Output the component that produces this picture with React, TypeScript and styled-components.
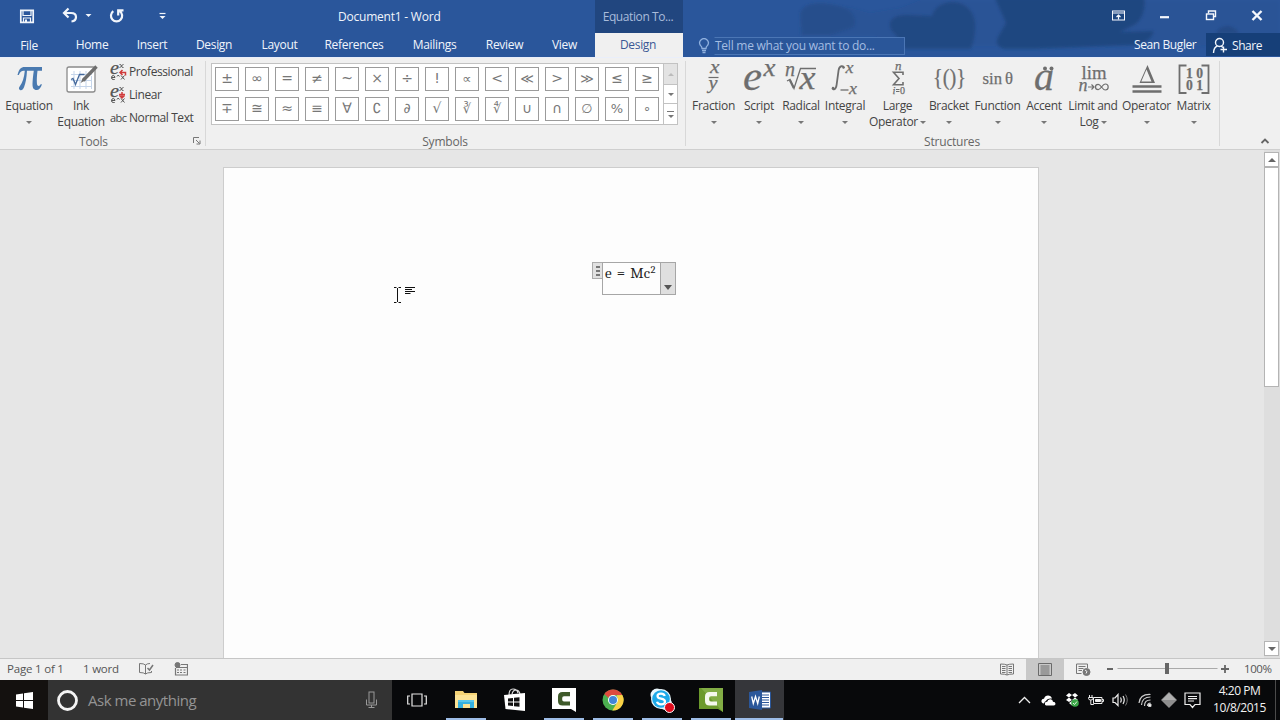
import React from "react";
import styled, { createGlobalStyle, css } from "styled-components";

const ui = `"Open Sans", "Noto Sans", sans-serif`;
const serif = `"Liberation Serif", "DejaVu Serif", serif`;

const GlobalStyle = createGlobalStyle`
  * { box-sizing: border-box; }
  body { margin: 0; overflow: hidden; }
`;

const Window = styled.div`
  width: 1280px;
  height: 720px;
  display: flex;
  flex-direction: column;
  font-family: ${ui};
  font-size: 12px;
  letter-spacing: -0.32px;
  color: #444;
  background: #e6e6e6;
  overflow: hidden;
  white-space: nowrap;
`;

/* ---------- title bar and tabs ---------- */

const Header = styled.header`
  position: relative;
  height: 57px;
  flex: none;
  display: flex;
  background: #2a569b;
  color: #f1f5fb;
`;

const Backdrop = styled.svg`
  position: absolute;
  left: 780px;
  top: 0;
`;

const HeaderLeft = styled.div`
  width: 595px;
  display: flex;
  flex-direction: column;
`;

const TitleRow = styled.div`
  height: 33px;
  display: flex;
  align-items: center;
  padding-left: 19px;
`;

const QuickAccess = styled.div`
  width: 319px;
  display: flex;
  height: 30px;
`;

const Title = styled.div`
  letter-spacing: -0.22px;
`;

const TabRow = styled.nav`
  height: 24px;
  display: flex;
`;

const Tab = styled.div<{ $w: number }>`
  width: ${(p) => p.$w}px;
  height: 24px;
  line-height: 24px;
  text-align: center;
  &:first-child { line-height: 26px; }
`;

const Contextual = styled.div`
  width: 88px;
  display: flex;
  flex-direction: column;
  text-align: center;
`;

const ContextTitle = styled.div`
  height: 33px;
  line-height: 34px;
  padding-right: 2px;
  background: #21467f;
  color: #a9bcdb;
  letter-spacing: -0.4px;
`;

const ActiveTab = styled.div`
  height: 24px;
  line-height: 24px;
  padding-right: 2px;
  background: #f0f0f0;
  color: #3a5795;
`;

const HeaderRight = styled.div`
  position: relative;
  flex: 1;
  display: flex;
  flex-direction: column;
`;

const Controls = styled.div`
  height: 33px;
  display: flex;
  justify-content: flex-end;
  align-items: center;
`;

const ActionRow = styled.div`
  height: 24px;
  display: flex;
  padding-left: 14px;
`;

const TellMe = styled.div`
  width: 208px;
  height: 18px;
  margin-top: 4px;
  display: flex;
  align-items: center;
  color: #a4bde2;
  letter-spacing: -0.25px;
`;

const TellField = styled.div`
  width: 191px;
  height: 18px;
  margin-left: 3px;
  line-height: 15px;
  border: 1px solid #4b76b5;
  border-left-color: transparent;
  background: #2a5699;
`;

const Account = styled.div`
  margin-left: auto;
  width: 72px;
  line-height: 24px;
  letter-spacing: -0.4px;
`;

const Share = styled.div`
  width: 74px;
  height: 23px;
  display: flex;
  align-items: center;
  gap: 4px;
  padding: 1px 0 0 6px;
  background: #163f78;
  letter-spacing: -0.45px;
`;

/* ---------- ribbon ---------- */

const Ribbon = styled.section`
  height: 93px;
  flex: none;
  display: flex;
  background: #f0f0f0;
  border-top: 1px solid #e9eefa;
  border-bottom: 1px solid #cfcfcf;
`;

const Group = styled.div<{ $w: number }>`
  width: ${(p) => p.$w}px;
  display: flex;
  flex-direction: column;
  padding-top: 2px;
`;

const Divider = styled.div`
  width: 1px;
  height: 85px;
  margin-top: 3px;
  background: #d8d8d8;
`;

const GroupBody = styled.div`
  height: 73px;
  display: flex;
`;

const GroupName = styled.div`
  position: relative;
  height: 16px;
  line-height: 17px;
  padding-right: 18px;
  text-align: center;
  color: #666;
  letter-spacing: -0.2px;
`;

const CenteredName = styled(GroupName)`
  padding-right: 1px;
`;

const Launcher = styled.svg`
  position: absolute;
  right: 4px;
  top: 4px;
`;

const BigButton = styled.div<{ $w: number }>`
  width: ${(p) => p.$w}px;
  display: flex;
  flex-direction: column;
  align-items: center;
  line-height: 16px;
`;

const IconBox = styled.svg`
  display: block;
  width: 48px;
  height: 36px;
  margin-bottom: 2px;
  overflow: visible;
  flex: none;
`;

const Line = styled.div`
  height: 16px;
  display: flex;
  align-items: center;
  justify-content: center;
  gap: 2px;
`;

const Caret = styled.i<{ $c?: string }>`
  border: 3px solid transparent;
  border-top-color: ${(p) => p.$c || "#777"};
  border-bottom: 0;
`;

const SmallButtons = styled.div`
  display: flex;
  flex-direction: column;
  padding: 0 0 0 6px;
  letter-spacing: -0.42px;
`;

const SmallButton = styled.div`
  height: 23px;
  display: flex;
  align-items: center;
  gap: 3px;
`;

const Abc = styled.span`
  width: 16px;
  font-size: 11px;
  letter-spacing: -0.5px;
`;

const Gallery = styled.div`
  width: 467px;
  height: 62px;
  margin: 3px 0 8px 5px;
  display: flex;
  border: 1px solid #c2c2c2;
  background: #fff;
`;

const Cells = styled.div`
  display: grid;
  grid-template-columns: repeat(15, 24px);
  grid-auto-rows: 24px;
  gap: 6px;
  padding: 3px;
  width: 451px;
`;

const Cell = styled.div<{ $small?: boolean }>`
  border: 1px solid #9b9b9b;
  text-align: center;
  line-height: 21px;
  font-family: "DejaVu Sans", sans-serif;
  font-size: ${(p) => (p.$small ? 13 : 14)}px;
  letter-spacing: 0;
  color: #777;
`;

const Scroller = styled.div`
  width: 14px;
  display: grid;
  grid-template-rows: 20px 19px 21px;
  border-left: 1px solid #c2c2c2;
`;

const ScrollCell = styled.div<{ $off?: boolean }>`
  display: flex;
  flex-direction: column;
  align-items: center;
  justify-content: center;
  gap: 3px;
  background: ${(p) => (p.$off ? "#e3e3e3" : "#fff")};
  & + & { border-top: 1px solid #c2c2c2; }
`;

const UpCaret = styled.i<{ $c: string }>`
  border: 3px solid transparent;
  border-bottom-color: ${(p) => p.$c};
  border-top: 0;
`;

const Bar = styled.i`
  width: 7px;
  height: 1px;
  background: #777;
`;

const Collapse = styled.svg`
  margin: 79px 0 0 40px;
`;

const StructureBody = styled(GroupBody)`
  padding-left: 4px;
`;

/* ---------- document ---------- */

const Workspace = styled.main`
  height: 508px;
  flex: none;
  display: flex;
`;

const Canvas = styled.div`
  position: relative;
  width: 1264px;
  padding: 17px 0 0 223px;
`;

const Sheet = styled.div`
  width: 816px;
  height: 491px;
  padding: 94px 0 0 368px;
  background: #fdfdfd;
  border: 1px solid #cdcdcd;
  border-bottom: 0;
`;

const EquationBox = styled.div`
  display: flex;
  align-items: flex-start;
`;

const Grip = styled.div`
  width: 10px;
  height: 17px;
  display: flex;
  flex-direction: column;
  align-items: center;
  justify-content: center;
  gap: 2px;
  padding-left: 1px;
  border: 1px solid #ababab;
  border-right: 0;
  background: #e1e1e1;
`;

const GripDot = styled.i`
  width: 4px;
  height: 2px;
  background: #777;
`;

const Formula = styled.div`
  width: 58px;
  height: 33px;
  padding-left: 2px;
  border: 1px solid #a6a6a6;
  border-right: 0;
  font-family: Cambria, Caladea, "Noto Serif", "DejaVu Serif", serif;
  font-size: 15px;
  line-height: 21px;
  letter-spacing: 0.2px;
  word-spacing: 1.5px;
  color: #222;
  & sup { font-size: 10.5px; line-height: 0; vertical-align: 5px; }
`;

const FormulaMenu = styled.div`
  width: 16px;
  height: 33px;
  display: flex;
  align-items: flex-end;
  justify-content: center;
  padding-bottom: 4px;
  border: 1px solid #a6a6a6;
  background: #dfdfdf;
`;

const MenuCaret = styled.i`
  border: 4px solid transparent;
  border-top: 5px solid #555;
  border-bottom: 0;
`;

const Pointer = styled.svg`
  position: absolute;
  left: 393px;
  top: 136px;
`;

const ScrollBar = styled.div`
  width: 16px;
  padding: 2px 1px 2px 0;
  display: flex;
  flex-direction: column;
  background: #dedede;
`;

const ScrollButton = styled.div`
  height: 15px;
  display: flex;
  align-items: center;
  justify-content: center;
  border: 1px solid #b4b4b4;
  background: #fff;
  & > i { border-width: 4px; }
`;

const ScrollUp = styled(UpCaret)`
  && { border-top: 0; }
`;

const ScrollDown = styled(Caret)`
  && { border-bottom: 0; }
`;

const ScrollThumb = styled.div`
  height: 220px;
  margin-bottom: auto;
  border: 1px solid #b4b4b4;
  background: #fff;
`;

/* ---------- status bar ---------- */

const StatusBar = styled.footer`
  height: 22px;
  flex: none;
  display: flex;
  align-items: center;
  padding-left: 7px;
  background: #f0f0f0;
  border-top: 1px solid #c6c6c6;
  font-size: 11.5px;
  letter-spacing: -0.2px;
  color: #555;
`;

const StatusText = styled.span<{ $w: number }>`
  width: ${(p) => p.$w}px;
  padding-bottom: 2px;
`;

const StatusIcon = styled.div<{ $w: number; $on?: boolean }>`
  width: ${(p) => p.$w}px;
  height: 21px;
  display: flex;
  align-items: center;
  justify-content: center;
  padding-bottom: 1px;
  ${(p) => p.$on && css`background: #c8c8c8;`}
`;

const ViewTools = styled.div`
  margin-left: auto;
  display: flex;
  align-items: center;
`;

const ZoomValue = styled.span`
  width: 50px;
  padding: 0 0 2px 14px;
  letter-spacing: -0.4px;
`;

/* ---------- taskbar ---------- */

const Taskbar = styled.div`
  height: 40px;
  flex: none;
  display: flex;
  background: #08090b;
`;

const Start = styled.div`
  width: 48px;
  display: flex;
  align-items: center;
  justify-content: center;
  background: #14110f;
`;

const Search = styled.div`
  width: 344px;
  display: flex;
  align-items: center;
  padding: 0 14px 0 8px;
  background: #333;
  color: #949494;
  font-size: 15px;
  letter-spacing: -0.48px;
`;

const SearchText = styled.span`
  flex: 1;
  padding-left: 9px;
`;

const TaskButton = styled.div<{ $open?: boolean; $active?: boolean }>`
  position: relative;
  width: 49px;
  height: 40px;
  display: flex;
  align-items: center;
  justify-content: center;
  background: ${(p) => (p.$active ? "#35363a" : "transparent")};
  &::after {
    content: "";
    position: absolute;
    left: ${(p) => (p.$active ? 0 : 5)}px;
    right: ${(p) => (p.$active ? 1 : 4)}px;
    bottom: 0;
    height: ${(p) => (p.$open ? 2 : 0)}px;
    background: #9dbce6;
  }
`;

const Tray = styled.div`
  margin-left: auto;
  display: flex;
  align-items: center;
`;

const TrayIcon = styled.div<{ $w: number }>`
  width: ${(p) => p.$w}px;
  display: flex;
  justify-content: center;
`;

const Clock = styled.div`
  width: 70px;
  padding: 0 1px 2px 0;
  text-align: center;
  color: #f2f2f2;
  font-size: 12px;
  line-height: 17px;
  letter-spacing: -0.45px;
`;

const ShowDesktop = styled.div`
  width: 5px;
  height: 40px;
  border-left: 1px solid #4b4b4b;
`;

/* ---------- drawings ---------- */

type TProps = {
  x: number; y: number; s: number; w?: number; i?: boolean; b?: boolean; c?: string; children: React.ReactNode;
};
const T = ({ x, y, s, w, i, b, c = "#6e6e6e", children }: TProps) => (
  <text
    x={x} y={y} fontSize={s} fill={c} fontFamily={serif} letterSpacing={0}
    stroke={c} strokeWidth={0.25}
    fontStyle={i ? "italic" : "normal"} fontWeight={b ? 700 : 400}
    textLength={w} lengthAdjust="spacingAndGlyphs"
  >
    {children}
  </text>
);

const FractionIcon = () => (
  <IconBox viewBox="0 0 48 36">
    <T x={20} y={13} s={19} i w={9.5}>x</T>
    <path d="M18.500 17.500h10" stroke="#6e6e6e" strokeWidth="1.2" />
    <T x={18.500} y={29} s={19} i w={9}>y</T>
  </IconBox>
);
const ScriptIcon = () => (
  <IconBox viewBox="0 0 48 36">
    <T x={8} y={30} s={43} i w={19}>e</T>
    <T x={28.500} y={16} s={26} i w={12}>x</T>
  </IconBox>
);
const RadicalIcon = () => (
  <IconBox viewBox="0 0 48 36">
    <T x={8} y={16} s={21} i w={10}>n</T>
    <path d="M10 21l3-1.500 4 9 6.500-20H39" fill="none" stroke="#6e6e6e" strokeWidth="1.300" />
    <path d="M12.800 20l4 8" stroke="#6e6e6e" strokeWidth="2.200" />
    <T x={22.500} y={29} s={33} i w={16}>x</T>
  </IconBox>
);
const IntegralIcon = () => (
  <IconBox viewBox="0 0 48 36">
    <path d="M23 8c-.6-2.400-4.500-3-5.400 2.200l-2 14.600c-.8 5.400-3.600 5.200-4.300 3.200" fill="none" stroke="#6e6e6e" strokeWidth="1.800" />
    <circle cx="22.500" cy="7.500" r="1.200" fill="#6e6e6e" />
    <circle cx="12" cy="28" r="1.200" fill="#6e6e6e" />
    <T x={24.500} y={12.500} s={17} i w={8}>x</T>
    <path d="M19.500 30h8" stroke="#6e6e6e" strokeWidth="1.300" />
    <T x={28} y={33.500} s={17} i w={8}>x</T>
  </IconBox>
);
const LargeIcon = () => (
  <IconBox viewBox="0 0 48 36">
    <T x={21} y={9.500} s={13} i w={6.500}>n</T>
    <path d="M29 15v-2.800H19.500L25 18.500l-5.500 6.300H29V22" fill="none" stroke="#6e6e6e" strokeWidth="1.600" />
    <T x={18.500} y={34} s={10.500} i w={3}>i</T>
    <path d="M22 29.500h3.500M22 31.500h3.500" stroke="#6e6e6e" />
    <T x={26} y={34} s={10.500} w={5}>0</T>
  </IconBox>
);
const BracketIcon = () => (
  <IconBox viewBox="0 0 48 36">
    <T x={8} y={25} s={23} w={33}>{"{()}"}</T>
  </IconBox>
);
const FunctionIcon = () => (
  <IconBox viewBox="0 0 48 36">
    <T x={8.500} y={24} s={17} w={19.500}>sin</T>
    <T x={31} y={24} s={17} w={8}>θ</T>
  </IconBox>
);
const AccentIcon = () => (
  <IconBox viewBox="0 0 48 36">
    <T x={14} y={30} s={40} i w={20}>a</T>
    <circle cx="25" cy="8.500" r="2" fill="#6e6e6e" />
    <circle cx="31.500" cy="8.500" r="2" fill="#6e6e6e" />
  </IconBox>
);
const LimitIcon = () => (
  <IconBox viewBox="0 0 48 36">
    <T x={12.500} y={19} s={19} w={25}>lim</T>
    <T x={9.500} y={31} s={18} i w={9}>n</T>
    <path d="M19 27h6m-2.500-2.500l2.500 2.500-2.500 2.500" fill="none" stroke="#6e6e6e" strokeWidth="1.200" />
    <path d="M32.500 27c1.500-2 2.500-3 3.700-3a2.700 2.700 0 0 1 0 6c-1.200 0-2.200-1-3.700-3-1.500-2-2.200-2.700-3.300-2.700a2.500 2.500 0 0 0 0 5.400c1.100 0 1.800-.7 3.300-2.700z" fill="none" stroke="#6e6e6e" strokeWidth="1.200" />
  </IconBox>
);
const OperatorIcon = () => (
  <IconBox viewBox="0 0 48 36">
    <path d="M24.500 5l-8 18h15.500zM23.500 9.500l5 12H18.300z" fill="#6e6e6e" fillRule="evenodd" />
    <path d="M9.500 26.500h29M9.500 31.500h29" stroke="#6e6e6e" strokeWidth="2.600" />
  </IconBox>
);
const MatrixIcon = () => (
  <IconBox viewBox="0 0 48 36">
    <path d="M16.500 5.500H9.500v27.500h7M31.500 5.500h7v27.500h-7" fill="none" stroke="#6e6e6e" strokeWidth="1.800" />
    <T x={16} y={17.500} s={14} b w={17}>1 0</T>
    <T x={16} y={29.500} s={14} b w={17}>0 1</T>
  </IconBox>
);
const PiIcon = () => (
  <IconBox viewBox="0 0 48 36">
    <path
      d="M12.500 15c1.500-6 3.500-8 7-8H37v3.800h-4.500c-.6 5-.8 8.500-.6 12.500.2 3.300 2.600 3.500 4 .8l1 .5c-1 3.500-3 5.500-5.200 5.500-3.200 0-4.300-2.300-4.200-6 .1-3.600.5-8 1.300-13.300H22c-.4 7-1.400 12.500-3 16.500-1 2.500-2.600 3.300-4 2.600-1.500-.8-1.200-2.200-.2-3.600 2.700-3.600 4.400-8.500 5-15.500h-1c-2.500 0-3.700 1.200-5 4.200z"
      fill="#4a7ab0"
    />
  </IconBox>
);
const InkIcon = () => (
  <IconBox viewBox="0 0 48 36">
    <rect x="10" y="7" width="28" height="25" rx="2" fill="#fff" stroke="#8b8b8b" strokeWidth="1.300" />
    <path d="M14 14.500h21M14 20.500h21M14 26.500h21M17 11v18M23 11v18M29 11v18M34.500 16v13" stroke="#c5d5ea" />
    <path d="M14 19.500l2-1 2.500 6 4-10h5" fill="none" stroke="#44699c" strokeWidth="1.300" />
    <path d="M39.500 6.500L26 20.500" stroke="#6e6e6e" strokeWidth="3.400" />
    <path d="M26.500 17.500l2.500 2.500-5.500 3z" fill="#6e6e6e" />
  </IconBox>
);

const ExIcon = ({ down }: { down?: boolean }) => (
  <svg width="16" height="18" viewBox="0 0 16 18" overflow="visible">
    <T x={0} y={10.500} s={18} i w={9} c="#555">e</T>
    <path d="M9.500 1.500q1.500-.5 2 1.500t2 1.500M13.500 1l-4 4" fill="none" stroke="#555" />
    <path
      d={down ? "M12 6v5M9 8.500h6M9.500 9.500l2.500 2.500 2.500-2.500" : "M15.500 12.500V9.500H10M12.500 7L10 9.500l2.500 2.500"}
      fill="none" stroke="#d03b3b" strokeWidth="1.500"
    />
    <path d="M1.500 14.500h3.500q-.3-2-1.800-2t-1.700 2q0 2 1.700 2h1.500M7 13.500l1.200-1.500 1.200 1.500M11 12.500l3.500 4M14.500 12.500l-3.500 4" fill="none" stroke="#555" />
  </svg>
);

const structures: { w: number; icon: React.ReactNode; lines: string[] }[] = [
  { w: 47, icon: <FractionIcon />, lines: ["Fraction"] },
  { w: 44, icon: <ScriptIcon />, lines: ["Script"] },
  { w: 40, icon: <RadicalIcon />, lines: ["Radical"] },
  { w: 48, icon: <IntegralIcon />, lines: ["Integral"] },
  { w: 57, icon: <LargeIcon />, lines: ["Large", "Operator"] },
  { w: 46, icon: <BracketIcon />, lines: ["Bracket"] },
  { w: 51, icon: <FunctionIcon />, lines: ["Function"] },
  { w: 42, icon: <AccentIcon />, lines: ["Accent"] },
  { w: 56, icon: <LimitIcon />, lines: ["Limit and", "Log"] },
  { w: 51, icon: <OperatorIcon />, lines: ["Operator"] },
  { w: 43, icon: <MatrixIcon />, lines: ["Matrix"] },
];

const symbols = [..."±∞=≠~×÷!∝<≪>≫≤≥", ..."∓≅≈≡∀∁∂√∛∜∪∩∅%∘"];

const tabs: [string, number][] = [
  ["File", 58], ["Home", 68], ["Insert", 52], ["Design", 72], ["Layout", 59],
  ["References", 90], ["Mailings", 71], ["Review", 69], ["View", 51],
];

const Camtasia = ({ green }: { green?: boolean }) => (
  <svg width="24" height="24" viewBox="0 0 24 24">
    <path d="M0 0h24v24l-5-3H0z" fill={green ? "#6c9a2c" : "#fff"} />
    {green && <path d="M24 0v24L2 0z" fill="#82ad45" />}
    <path
      d="M18 4h-7.500Q6 4 6 8.500v4.500Q6 17.500 10.500 17.500H18v-4h-6q-1.800 0-1.800-1.800V10q0-1.800 1.800-1.800h6z"
      fill={green ? "#f4f8ec" : "#3f5a2a"}
    />
  </svg>
);

export default function App() {
  return (
    <>
      <GlobalStyle />
      <Window>
        <Header>
          <Backdrop width="500" height="57" viewBox="0 0 500 57">
            <defs>
              <filter id="soft" x="-5%" y="-20%" width="110%" height="140%">
                <feGaussianBlur stdDeviation="1.5" />
              </filter>
            </defs>
            <g fill="#204880" filter="url(#soft)">
              <path d="M20 14Q22 3 42 3l30 5 18 5 30-5 20-8h360v36l-80 10H120L95 36H20z" opacity=".18" />
              <path d="M20 14Q22 3 42 3q20 2 28 8 8 8 4 16l-24 8H22z" opacity=".4" />
              <path d="M110 22q4-8 18-7l24 1q4-14 22-14 18 2 21 20 1 14-4 27h-66l-10-15q-6-4-5-12z" opacity=".85" />
              <path d="M214 -4h150q3 18-8 28l-16 8 34-1q-4 12-20 14l-100 4h-30q-10-3-6-12l8-14z" opacity=".95" />
              <path d="M436 34q3-9 13-8 8 2 10 8z" opacity=".7" />
            </g>
          </Backdrop>
          <HeaderLeft>
            <TitleRow>
              <QuickAccess>
                <svg width="160" height="30" viewBox="19 0 160 30">
                  <path d="M20.800 8.300h12.400v12H20.800z" fill="none" stroke="#f1f5fb" strokeWidth="1.700" />
                  <path d="M23 8v5.500h8V8M23.500 20.500V16h7v4.500" fill="none" stroke="#f1f5fb" strokeWidth="1.200" />
                  <path d="M25 17.500h2v3h-2z" fill="#f1f5fb" />
                  <path d="M68.500 6.500L64 11l4.500 4.500M64.500 11H71q5 0 5 4t-4.500 4.500" fill="none" stroke="#f1f5fb" strokeWidth="2.200" />
                  <path d="M85.500 12h6l-3 3z" fill="#f1f5fb" />
                  <path d="M113.300 9.200a5.600 5.600 0 1 0 6.500 0M123.500 8.300h-5.300v5.200" fill="none" stroke="#f1f5fb" strokeWidth="2.200" />
                  <path d="M159.500 11.500h6" stroke="#f1f5fb" strokeWidth="1.200" />
                  <path d="M159.500 14h6l-3 3z" fill="#f1f5fb" />
                </svg>
              </QuickAccess>
              <Title>Document1 - Word</Title>
            </TitleRow>
            <TabRow>
              {tabs.map(([name, w]) => <Tab key={name} $w={w}>{name}</Tab>)}
            </TabRow>
          </HeaderLeft>
          <Contextual>
            <ContextTitle>Equation To...</ContextTitle>
            <ActiveTab>Design</ActiveTab>
          </Contextual>
          <HeaderRight>
            <Controls>
              <svg width="172" height="30" viewBox="1108 0 172 30" fill="none" stroke="#f5f8fd">
                <rect x="1112.500" y="9" width="12" height="9" />
                <path d="M1112 11h13M1118.500 17.500v-4.500M1116.500 15l2-2 2 2" strokeWidth="1.200" />
                <path d="M1160 15.200h9" strokeWidth="2.200" />
                <path d="M1208.500 11.500V9h7v5.500h-2" strokeWidth="1.400" />
                <rect x="1206.500" y="12" width="7" height="5.500" strokeWidth="1.400" />
                <path d="M1252.500 9l9 9M1261.500 9l-9 9" strokeWidth="2.400" />
              </svg>
            </Controls>
            <ActionRow>
              <TellMe>
                <svg width="14" height="16" viewBox="0 0 14 16" fill="none" stroke="#8fb0de" strokeWidth="1.300">
                  <path d="M5 10.500Q5 8.500 3.500 7.500a4.300 4.300 0 1 1 7 0Q9 8.500 9 10.500zM5 12.500h4M5.500 14.500h3" />
                </svg>
                <TellField>Tell me what you want to do...</TellField>
              </TellMe>
              <Account>Sean Bugler</Account>
              <Share>
                <svg width="16" height="17" viewBox="0 0 16 17" fill="none" stroke="#f1f5fb" strokeWidth="1.400">
                  <circle cx="7.500" cy="5.500" r="4" />
                  <path d="M1.500 16q.3-6 4-7M9 9l2 1.500M11.500 9.500v6M8.500 12.500h6.500" />
                </svg>
                Share
              </Share>
            </ActionRow>
          </HeaderRight>
        </Header>

        <Ribbon>
          <Group $w={205}>
            <GroupBody>
              <BigButton $w={58}>
                <PiIcon />
                <Line>Equation</Line>
                <Line><Caret /></Line>
              </BigButton>
              <BigButton $w={46}>
                <InkIcon />
                <Line>Ink</Line>
                <Line>Equation</Line>
              </BigButton>
              <SmallButtons>
                <SmallButton><ExIcon />Professional</SmallButton>
                <SmallButton><ExIcon down />Linear</SmallButton>
                <SmallButton><Abc>abc</Abc>Normal Text</SmallButton>
              </SmallButtons>
            </GroupBody>
            <GroupName>
              Tools
              <Launcher width="8" height="8" viewBox="0 0 8 8" fill="none" stroke="#777">
                <path d="M.5 6V.5H6M3 3l3.500 3.500M7 3.500V7H3.500" />
              </Launcher>
            </GroupName>
          </Group>
          <Divider />
          <Group $w={479}>
            <Gallery>
              <Cells>
                {symbols.map((s) => <Cell key={s} $small={"∛∜∅%∘≪≫∝".includes(s)}>{s}</Cell>)}
              </Cells>
              <Scroller>
                <ScrollCell $off><UpCaret $c="#bbb" /></ScrollCell>
                <ScrollCell><Caret /></ScrollCell>
                <ScrollCell><Bar /><Caret /></ScrollCell>
              </Scroller>
            </Gallery>
            <CenteredName>Symbols</CenteredName>
          </Group>
          <Divider />
          <Group $w={533}>
            <StructureBody>
              {structures.map((s, n) => (
                <BigButton key={n} $w={s.w}>
                  {s.icon}
                  <Line>{s.lines[0]}</Line>
                  <Line>{s.lines[1]}<Caret /></Line>
                </BigButton>
              ))}
            </StructureBody>
            <CenteredName>Structures</CenteredName>
          </Group>
          <Divider />
          <Collapse width="10" height="8" viewBox="0 0 10 8">
            <path d="M1.500 6L5 2.500 8.500 6" fill="none" stroke="#666" strokeWidth="1.800" />
          </Collapse>
        </Ribbon>

        <Workspace>
          <Canvas>
            <Sheet>
              <EquationBox>
                <Grip><GripDot /><GripDot /><GripDot /></Grip>
                <Formula>e = Mc<sup>2</sup></Formula>
                <FormulaMenu><MenuCaret /></FormulaMenu>
              </EquationBox>
            </Sheet>
            <Pointer width="24" height="18" viewBox="0 0 24 18" stroke="#111" fill="none">
              <path d="M1 1.500h2.500M5.500 1.500H8M4.500 2v14M1 16.500h2.500M5.500 16.500H8" />
              <path d="M12 1.500h10M12 3.500h7M12 5.500h10M12 7.500h5.500" />
            </Pointer>
          </Canvas>
          <ScrollBar>
            <ScrollButton><ScrollUp $c="#666" /></ScrollButton>
            <ScrollThumb />
            <ScrollButton><ScrollDown $c="#666" /></ScrollButton>
          </ScrollBar>
        </Workspace>

        <StatusBar>
          <StatusText $w={76}>Page 1 of 1</StatusText>
          <StatusText $w={52}>1 word</StatusText>
          <StatusIcon $w={22}>
            <svg width="16" height="14" viewBox="0 0 16 14" fill="none" stroke="#777">
              <path d="M7.500 3Q6 1.500 1.500 1.500v9q4.500 0 6 1.500zM7.500 3Q9 1.500 12 1.500M7.500 12q1.500-1.500 6-1.500V9" />
              <path d="M9.500 6l2 2 3.500-5" strokeWidth="1.500" />
            </svg>
          </StatusIcon>
          <StatusIcon $w={47}>
            <svg width="14" height="14" viewBox="0 0 14 14" fill="none" stroke="#777">
              <path d="M7 2.500h6.500v10.500H1.500V6M2 5.500h11M3 8h2M6 8h2M9.500 8h2M3 10.500h2M6 10.500h2M9.500 10.500h2" strokeWidth="1.200" />
              <circle cx="3.500" cy="3" r="2.500" fill="#777" />
            </svg>
          </StatusIcon>
          <ViewTools>
            <StatusIcon $w={38}>
              <svg width="14" height="13" viewBox="0 0 14 13" fill="none" stroke="#777">
                <path d="M7 2Q5 1 .5 1v10Q5 11 7 12Q9 11 13.500 11V1Q9 1 7 2zM7 2v10M2 3.500h3.500M2 5.500h3.500M2 7.500h3.500M2 9.500h3.500M8.500 3.500H12M8.500 5.500H12M8.500 7.500H12M8.500 9.500H12" />
              </svg>
            </StatusIcon>
            <StatusIcon $w={38} $on>
              <svg width="14" height="13" viewBox="0 0 14 13" fill="none" stroke="#6a6a6a">
                <path d="M.5.500h13v12H.5zM2.500 3h9M2.500 5h9M2.500 7h9M2.500 9h9M2.500 11h9" />
              </svg>
            </StatusIcon>
            <StatusIcon $w={39}>
              <svg width="15" height="13" viewBox="0 0 15 13" fill="none" stroke="#777">
                <path d="M5.500 10.500H.5V1h11v4M2.500 3.500h7M2.500 5.500h5M2.500 7.500h3.500" />
                <circle cx="10.500" cy="9" r="3.500" fill="#777" />
                <path d="M9 7l2 1.500-1 2" stroke="#f0f0f0" />
              </svg>
            </StatusIcon>
            <svg width="127" height="20" viewBox="0 0 127 20">
              <path d="M4 9h6M118 9h8M122 5v8" stroke="#666" strokeWidth="1.800" />
              <path d="M14.500 8.500h100" stroke="#aaa" />
              <rect x="62" y="3" width="4" height="11" fill="#666" />
            </svg>
            <ZoomValue>100%</ZoomValue>
          </ViewTools>
        </StatusBar>

        <Taskbar>
          <Start>
            <svg width="17" height="17" viewBox="0 0 17 17" fill="#fff">
              <path d="M0 2.500l7-1V8H0zM8 1.300L17 0v8H8zM0 9h7v6.500l-7-1zM8 9h9v8l-9-1.300z" />
            </svg>
          </Start>
          <Search>
            <svg width="23" height="23" viewBox="0 0 23 23">
              <circle cx="11.500" cy="11.500" r="9" fill="none" stroke="#f4f4f4" strokeWidth="2.800" />
            </svg>
            <SearchText>Ask me anything</SearchText>
            <svg width="13" height="18" viewBox="0 0 13 18" fill="none" stroke="#999">
              <rect x="4" y="1" width="5" height="11" />
              <path d="M1.500 8.500V14h10V8.500M6.500 14v2.500M3.500 16.500h6" />
            </svg>
          </Search>
          <TaskButton>
            <svg width="20" height="14" viewBox="0 0 20 14" fill="none" stroke="#e6e6e6" strokeWidth="1.200">
              <path d="M5 1h10v12H5zM3 3H.7v8H3M17 3h2.300v8H17" />
            </svg>
          </TaskButton>
          <TaskButton $open>
            <svg width="22" height="20" viewBox="0 0 22 20">
              <path d="M0 1h8l1.500 2H22v15H0z" fill="#f4d275" />
              <path d="M0 5h22v13H0z" fill="#fbe295" />
              <path d="M3 10h16v8h-4v-4H8v4H3z" fill="#35b0e0" />
              <path d="M3 10h16v2H3z" fill="#58c6ec" />
            </svg>
          </TaskButton>
          <TaskButton>
            <svg width="22" height="24" viewBox="0 0 22 24">
              <path d="M5 7Q5 1 9 1t5 4M8 6q1-4 4-4t4 4" fill="none" stroke="#ddd" strokeWidth="1.200" />
              <path d="M0 7l21-2v18L1.500 21z" fill="#fff" />
              <path d="M4 10.500l5-.5v3.500H4zM10 9.800l5.500-.6v4.300H10zM4 14.500h5V18l-5-.5zM10 14.500h5.500v4.300L10 18.200z" fill="#111" />
            </svg>
          </TaskButton>
          <TaskButton $open><Camtasia /></TaskButton>
          <TaskButton $open>
            <svg width="22" height="22" viewBox="0 0 22 22">
              <circle cx="11" cy="11" r="10.500" fill="#4caf50" />
              <path d="M11 .5A10.500 10.500 0 0 1 20.300 6H11a5 5 0 0 0-4.500 3L2.300 5A10.500 10.500 0 0 1 11 .5z" fill="#dd4b3e" />
              <path d="M20.300 6a10.500 10.500 0 0 1-10 15.500L15.500 13q1-3-1-6.800z" fill="#fbd146" />
              <circle cx="11" cy="11" r="5" fill="#fff" />
              <circle cx="11" cy="11" r="4" fill="#4285d8" />
            </svg>
          </TaskButton>
          <TaskButton $open>
            <svg width="26" height="26" viewBox="0 0 26 26">
              <circle cx="8" cy="8" r="6.500" fill="#e9f7fd" />
              <circle cx="16.500" cy="16.500" r="6.500" fill="#e9f7fd" />
              <circle cx="12" cy="12" r="10" fill="#e9f7fd" />
              <circle cx="12" cy="12" r="8.800" fill="#1da9e8" />
              <path d="M15.800 9q-.8-2.300-3.800-2.300-3.500 0-3.500 2.400 0 2 3.500 2.600 4 .7 4 3 0 2.600-4 2.600-3.300 0-4-2.600" fill="none" stroke="#fff" strokeWidth="2.200" />
              <circle cx="20.500" cy="20.500" r="5" fill="#e00b1c" stroke="#fff" />
            </svg>
          </TaskButton>
          <TaskButton $open><Camtasia green /></TaskButton>
          <TaskButton $open $active>
            <svg width="22" height="20" viewBox="0 0 22 20">
              <path d="M12 2h9.500v16H12z" fill="#fff" stroke="#2b579a" />
              <path d="M13 5h7M13 7.500h7M13 10h7M13 12.500h7M13 15h7" stroke="#2b579a" />
              <path d="M0 2L13 0v20L0 18z" fill="#2b579a" />
              <path d="M2.700 6.500l1.600 7 2.200-7 2.200 7 1.600-7" fill="none" stroke="#fff" strokeWidth="1.300" />
            </svg>
          </TaskButton>
          <Tray>
            <TrayIcon $w={24}>
              <svg width="13" height="8" viewBox="0 0 13 8"><path d="M1 7l5.500-5.500L12 7" fill="none" stroke="#eee" strokeWidth="1.300" /></svg>
            </TrayIcon>
            <TrayIcon $w={24}>
              <svg width="15" height="11" viewBox="0 0 15 11"><path d="M3 8.500Q0 8 .5 5.500 1 3.500 3 3.800 4 .5 7 .5t4 3Q6 3 5 6 3.500 6 3 8.500z" fill="#fff" /><path d="M5 10.500q-1.500-.5-1-2.300T6 7q1-3 3.500-2.700 2.300.2 2.500 2.400 2.500 0 2.500 2t-2 1.800z" fill="#fff" /></svg>
            </TrayIcon>
            <TrayIcon $w={24}>
              <svg width="14" height="14" viewBox="0 0 14 14"><path d="M4 0l3 2-3 2.500L1 2.500zM10 0l3 2.500-3 2L7 2zM4 4.500L7 7 4 9 1 7zM10 4.500L13 7l-3 2-3-2zM7 8l3 2-3 2.500L4 10z" fill="#fff" /><circle cx="10" cy="10" r="3.800" fill="#3ba648" /><path d="M8 10l1.500 1.500L12 8.500" fill="none" stroke="#dff5e0" /></svg>
            </TrayIcon>
            <TrayIcon $w={24}>
              <svg width="16" height="12" viewBox="0 0 16 12" fill="none" stroke="#eee"><path d="M5.500 3.500h8.500v6H5.500zM14 5.500h1.500v2H14M1.500 1v2M4 1v2M.5 3.500h4.500v1Q5 6 2.800 6T.5 4.500zM2.800 6v4.500h3" /><path d="M7.500 5.500h5v2h-5z" fill="#eee" /></svg>
            </TrayIcon>
            <TrayIcon $w={25}>
              <svg width="17" height="14" viewBox="0 0 17 14" fill="none" stroke="#eee"><path d="M1 5h2l3-3.500v11L3 9.500H1zM8.500 4.500q1.500 2.500 0 5M11 3q2.500 4 0 8" strokeWidth="1.200" /><path d="M13.500 1.500q3.500 5.500 0 11" stroke="#777" /></svg>
            </TrayIcon>
            <TrayIcon $w={24}>
              <svg width="14" height="14" viewBox="0 0 14 14" fill="none" stroke="#ccc"><path d="M1 10Q2 1 12.500 1.500M3.500 12Q4 4 12.500 4M6.500 13Q6.500 7 12.500 7M9.500 13q0-3 3-3" strokeWidth="1.200" /><path d="M10.500 11h2.500v2.500h-2.500z" fill="#fff" /></svg>
            </TrayIcon>
            <TrayIcon $w={23}>
              <svg width="16" height="16" viewBox="0 0 16 16"><path d="M8 0l8 8-8 8-8-8z" fill="#8e8e8e" /><path d="M8 1l7 7H1z" fill="#b0b0b0" /></svg>
            </TrayIcon>
            <TrayIcon $w={25}>
              <svg width="17" height="17" viewBox="0 0 17 17" fill="none" stroke="#eee"><path d="M1 1h15v11.500h-5L8.500 15.500 6 12.500H1zM4 4.500h9M4 6.700h9M4 9h6" strokeWidth="1.200" /></svg>
            </TrayIcon>
            <Clock>
              <div>4:20 PM</div>
              <div>10/8/2015</div>
            </Clock>
            <ShowDesktop />
          </Tray>
        </Taskbar>
      </Window>
    </>
  );
}
